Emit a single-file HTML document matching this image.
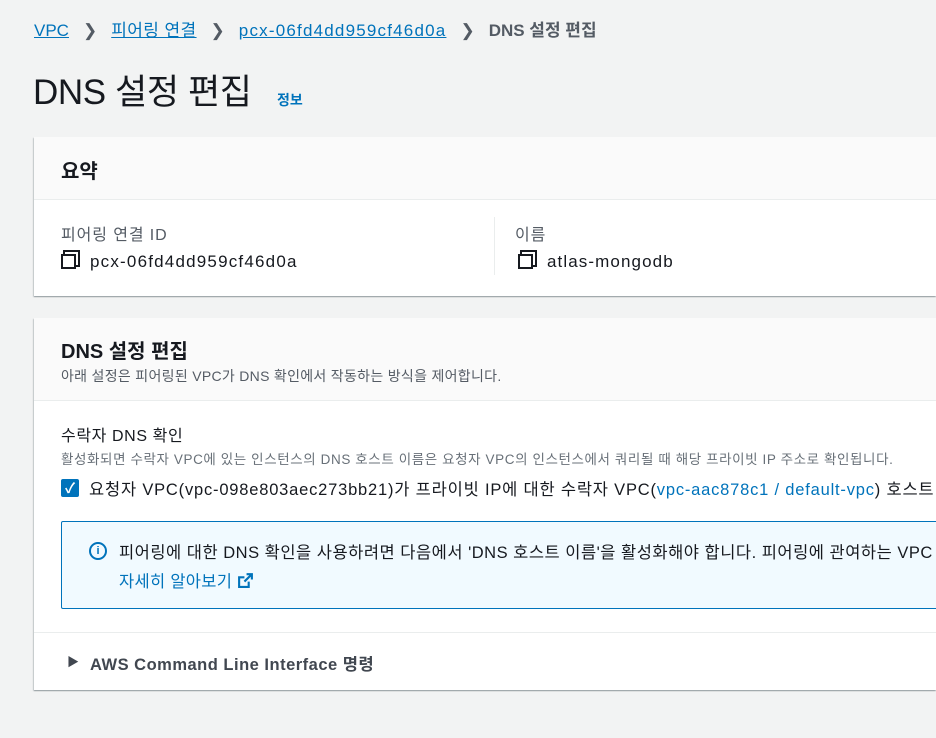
<!DOCTYPE html>
<html><head><meta charset="utf-8"><style>
*{margin:0;padding:0;box-sizing:border-box}
body{width:936px;height:738px;overflow:hidden;background:#f2f3f3;font-family:"Liberation Sans","Noto Sans CJK KR",sans-serif;color:#16191f;position:relative}
.a{position:absolute;white-space:nowrap}
.lk{color:#0073bb;text-decoration:underline}
.card{position:absolute;left:34px;width:902px;overflow:hidden;background:#fff;box-shadow:0 1px 1px rgba(0,28,36,.3),-1px 1px 1px rgba(0,28,36,.15)}
.cp{display:inline-block;width:15px;height:15px;border:2px solid #16191f;margin-right:14px;vertical-align:-2px;box-shadow:3px -3px 0 -1px #fff,3px -3px 0 1px #16191f}
</style></head><body>
<div class="a" style="left:34px;top:20px;font-size:17px;line-height:22px">
<span class="lk">VPC</span><span style="color:#545b64;margin:0 14px">&#x276F;</span><span class="lk" style="letter-spacing:0.4px">피어링 연결</span><span style="color:#545b64;margin:0 14px">&#x276F;</span><span class="lk" style="letter-spacing:1.2px">pcx-06fd4dd959cf46d0a</span><span style="color:#545b64;margin:0 14px">&#x276F;</span><span style="color:#545b64;font-weight:bold">DNS 설정 편집</span></div>
<div class="a" style="left:33px;top:70px;font-size:35px;line-height:46px;letter-spacing:-0.4px">DNS 설정 편집</div>
<div class="a" style="left:277px;top:90px;font-size:14px;font-weight:bold;color:#0073bb">정보</div>

<div class="card" style="top:137px;height:159px">
<div style="height:63px;background:#fafafa;border-bottom:1px solid #eaeded"></div>
<div class="a" style="left:27px;top:18px;font-size:20px;font-weight:bold">요약</div>
<div class="a" style="left:27px;top:84px;font-size:16px;color:#545b64;letter-spacing:0.9px">피어링 연결 ID</div>
<div class="a" style="left:27px;top:115px;font-size:17px;letter-spacing:1.2px"><span class="cp"></span>pcx-06fd4dd959cf46d0a</div>
<div style="position:absolute;left:460px;top:80px;width:1px;height:58px;background:#eaeded"></div>
<div class="a" style="left:481px;top:84px;font-size:16px;color:#545b64;letter-spacing:0.9px">이름</div>
<div class="a" style="left:484px;top:115px;font-size:17px;letter-spacing:1.1px"><span class="cp"></span>atlas-mongodb</div>
</div>

<div class="card" style="top:318px;height:372px">
<div style="height:83px;background:#fafafa;border-bottom:1px solid #eaeded"></div>
<div class="a" style="left:27px;top:17px;font-size:20px;font-weight:bold">DNS 설정 편집</div>
<div class="a" style="left:27px;top:48px;font-size:14px;color:#545b64;letter-spacing:0.3px">아래 설정은 피어링된 VPC가 DNS 확인에서 작동하는 방식을 제어합니다.</div>
<div class="a" style="left:27px;top:104px;font-size:16px;letter-spacing:0.6px">수락자 DNS 확인</div>
<div class="a" style="left:27px;top:130px;font-size:13.5px;color:#687078;letter-spacing:0.6px">활성화되면 수락자 VPC에 있는 인스턴스의 DNS 호스트 이름은 요청자 VPC의 인스턴스에서 쿼리될 때 해당 프라이빗 IP 주소로 확인됩니다.</div>
<div style="position:absolute;left:27px;top:161px;width:18px;height:18px;background:#0073bb;border-radius:2px;color:#fff;font-size:14px;line-height:18px;text-align:center;font-weight:bold">✓</div>
<div class="a" style="left:55px;top:158px;font-size:16.5px;letter-spacing:0.8px">요청자 VPC(vpc-098e803aec273bb21)가 프라이빗 IP에 대한 수락자 VPC(<span style="color:#0073bb">vpc-aac878c1 / default-vpc</span>) 호스트 이름을 확인하도록 허용</div>
<div style="position:absolute;left:27px;top:203px;width:940px;height:88px;background:#f1faff;border:1px solid #0073bb;border-radius:2px"></div>
<div style="position:absolute;left:55px;top:224px;width:18px;height:18px;border:2px solid #0073bb;border-radius:50%;color:#0073bb;font-size:11px;font-weight:bold;line-height:14px;text-align:center">i</div>
<div class="a" style="left:85px;top:221px;font-size:16.5px;letter-spacing:0.5px">피어링에 대한 DNS 확인을 사용하려면 다음에서 'DNS 호스트 이름'을 활성화해야 합니다. 피어링에 관여하는 VPC</div>
<div class="a" style="left:85px;top:250px;font-size:16.5px;color:#0073bb;letter-spacing:0.3px">자세히 알아보기 <svg width="17" height="17" viewBox="0 0 16 16" style="vertical-align:-2px"><path d="M9 2h5v5M14 2L7 9M11 9v5H2V5h5" fill="none" stroke="#0073bb" stroke-width="2"/></svg></div>
<div style="position:absolute;left:0;top:314px;width:960px;height:1px;background:#eaeded"></div>
<div class="a" style="left:33px;top:335px;font-size:12px;color:#414750">&#9654;</div>
<div class="a" style="left:56px;top:333px;font-size:16.5px;font-weight:bold;color:#414750;letter-spacing:0.5px">AWS Command Line Interface 명령</div>
</div>
</body></html>
